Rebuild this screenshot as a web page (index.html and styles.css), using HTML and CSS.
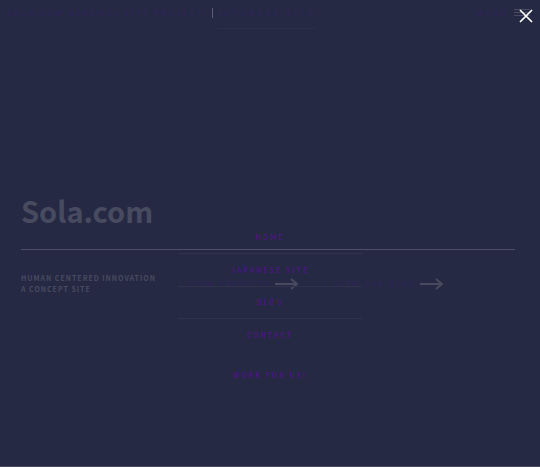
FILE: index.html
```html
<!DOCTYPE html>
<html lang="en">
<head>
<meta charset="utf-8">
<meta name="viewport" content="width=device-width, initial-scale=1">
<title>Sola.com</title>
<link rel="stylesheet" href="styles.css">
</head>
<body>
<div class="page">
  <header class="topbar">
    <nav class="top-links">
      <a href="#">SOLA.COM RENEWAL SITE PROJECT</a>
      <span class="divider"></span>
      <a class="language" href="#">JAPANESE SITE</a>
    </nav>
    <button class="menu-button" type="button">MENU
      <svg width="16" height="9" viewBox="0 0 16 9" aria-hidden="true"><path d="M0 1.5h16M0 4.5h16M0 7.5h16"/></svg>
    </button>
  </header>
  <main class="hero">
    <h1>Sola.com</h1>
    <div class="intro">
      <p>HUMAN CENTERED INNOVATION<br>A CONCEPT SITE</p>
      <a class="more" href="#">VIEW PROJECTS
        <svg width="23" height="12" viewBox="0 0 23 12" aria-hidden="true"><path d="M0 6h22M16 1l6 5-6 5"/></svg>
      </a>
      <a class="more" href="#">VIEW OUR BLOG
        <svg width="23" height="12" viewBox="0 0 23 12" aria-hidden="true"><path d="M0 6h22M16 1l6 5-6 5"/></svg>
      </a>
    </div>
  </main>
</div>
<div class="overlay">
  <button class="close" type="button" aria-label="Close menu">
    <svg width="14" height="14" viewBox="0 0 14 14" aria-hidden="true"><path d="M1 1l12 12M13 1L1 13"/></svg>
  </button>
  <nav class="menu">
    <a href="#">HOME</a>
    <a href="#">JAPANESE SITE</a>
    <a href="#">BLOG</a>
    <a href="#">CONTACT</a>
    <a class="work" href="#">WORK FOR US!</a>
  </nav>
</div>
</body>
</html>
```
FILE: styles.css
```css
* { box-sizing: border-box; }
body {
  margin: 0;
  background: #252943;
  color: #484b60;
  font-family: "Noto Sans CJK JP", "Noto Sans", sans-serif;
  font-weight: 700;
}
a { color: #2d2654; text-decoration: none; }
button { border: 0; padding: 0; background: none; font: inherit; cursor: pointer; }
svg { display: block; fill: none; stroke: currentColor; }
.page {
  display: flex;
  flex-direction: column;
  min-height: 100vh;
  border-bottom: 1px solid #484b60;
}
.topbar {
  display: flex;
  justify-content: space-between;
  align-items: flex-start;
  padding: 8px 10px 0 7px;
  font-size: 8px;
  line-height: 10px;
  letter-spacing: 2px;
}
.top-links { display: flex; white-space: nowrap; }
.divider { width: 1px; height: 10px; margin: 0 4px 0 8px; background: #5a5d72; }
.language {
  padding-bottom: 10px;
  border-bottom: 1px solid #2b2d4c;
  letter-spacing: 3px;
}
.menu-button { display: flex; gap: 6px; color: #2d2654; letter-spacing: 2px; }
.menu-button svg { color: #484b60; }
.hero { padding: 161px 25px 0 21px; }
h1 {
  margin: 0;
  padding-bottom: 19px;
  border-bottom: 1px solid #4c4f66;
  font-size: 29px;
  line-height: 40px;
}
.intro {
  display: grid;
  grid-template-columns: 169px 145px 1fr;
  padding-top: 23px;
}
.intro p { margin: 0; font-size: 7px; line-height: 11px; letter-spacing: 1px; white-space: nowrap; }
.more {
  display: flex;
  align-items: center;
  gap: 4px;
  color: #2d2654;
  font-size: 7px;
  line-height: 11px;
  letter-spacing: 2px;
  white-space: nowrap;
}
.more svg { color: #484b60; stroke-width: 2; }
.overlay { position: fixed; inset: 0; }
.close { position: absolute; top: 9px; right: 7px; color: #fff; }
.close svg { stroke-width: 1.7; }
.menu {
  width: 34%;
  margin: 221px auto 0;
  font-size: 7px;
  line-height: 32px;
  letter-spacing: 2px;
  text-align: center;
}
.menu a { display: block; color: #4c1684; border-bottom: 1px solid #2f334c; }
.menu a:nth-child(3) { line-height: 31px; }
.menu a:nth-child(n+4) { border: 0; }
.menu .work { margin-top: 8px; }
```
